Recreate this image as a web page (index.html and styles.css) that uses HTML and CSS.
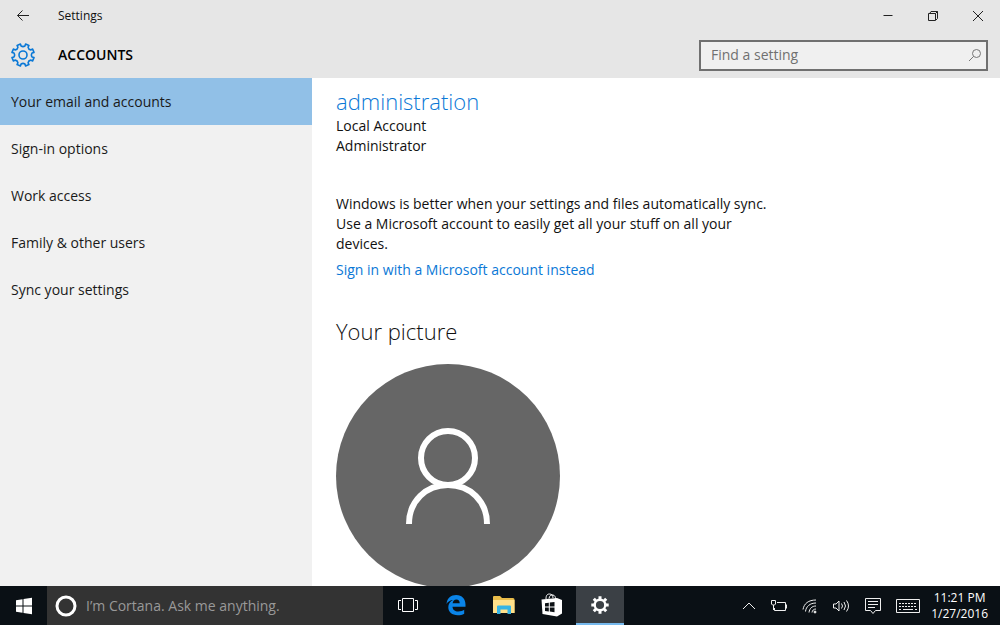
FILE: index.html
```html
<!DOCTYPE html>
<html lang="en">
<head>
    <meta charset="UTF-8">
    <meta name="viewport" content="width=device-width, initial-scale=1.0">
    <title>Settings</title>
    <link rel="stylesheet" href="styles.css">
</head>
<body>

<header>
    <div class="title-bar">
        <button class="back-button" aria-label="Back">
            <svg width="14" height="12" viewBox="0 0 14 12"><path d="M13 5.500H1.500M6.500 .5L1.500 5.500l5 5"/></svg>
        </button>
        <span class="window-title">Settings</span>
        <div class="window-buttons">
            <button aria-label="Minimize">
                <svg width="12" height="12" viewBox="0 0 12 12"><path d="M1.500 5.500h9"/></svg>
            </button>
            <button aria-label="Restore">
                <svg width="12" height="12" viewBox="0 0 12 12"><path d="M1.500 3.500h7v7h-7zM3 3L4 1.500h6.500v7L9 10M8.500 3.500l2-2"/></svg>
            </button>
            <button aria-label="Close">
                <svg width="12" height="12" viewBox="0 0 12 12"><path d="M1 1l10 10M11 1L1 11"/></svg>
            </button>
        </div>
    </div>
    <div class="heading-bar">
        <svg class="gear" width="24" height="24" viewBox="-12 -12 24 24">
            <path d="M-2.600 -11L-1.900 -9Q0 -7.800 1.900 -9L2.600 -11L5.900 -9.600L5.100 -7.700Q5.500 -5.500 7.700 -5.100L9.600 -5.900L11 -2.600L9 -1.900Q7.800 0 9 1.900L11 2.600L9.600 5.900L7.700 5.100Q5.500 5.500 5.100 7.700L5.900 9.600L2.600 11L1.900 9Q0 7.800 -1.900 9L-2.600 11L-5.900 9.600L-5.100 7.700Q-5.500 5.500 -7.700 5.100L-9.600 5.900L-11 2.600L-9 1.900Q-7.800 0 -9 -1.900L-11 -2.600L-9.600 -5.900L-7.700 -5.100Q-5.500 -5.500 -5.100 -7.700L-5.900 -9.600Z"/>
            <circle r="4"/>
        </svg>
        <h1>ACCOUNTS</h1>
        <div class="search-box">
            <input type="text" placeholder="Find a setting" aria-label="Find a setting">
            <svg width="14" height="14" viewBox="0 0 14 14"><circle cx="8.500" cy="5.500" r="4"/><path d="M5.700 8.300L1 13"/></svg>
        </div>
    </div>
</header>

<main>
    <nav>
        <a class="active" href="#">Your email and accounts</a>
        <a href="#">Sign-in options</a>
        <a href="#">Work access</a>
        <a href="#">Family &amp; other users</a>
        <a href="#">Sync your settings</a>
    </nav>

    <section>
        <h2 class="user-name">administration</h2>
        <p>Local Account<br>Administrator</p>
        <p class="sync-text">Windows is better when your settings and files automatically sync. Use a Microsoft account to easily get all your stuff on all your devices.</p>
        <a class="sign-in-link" href="#">Sign in with a Microsoft account instead</a>
        <h2 class="picture-title">Your picture</h2>
        <svg class="picture" width="224" height="224" viewBox="0 0 224 224">
            <circle class="disc" cx="112" cy="112" r="112"/>
            <circle cx="112" cy="94" r="27"/>
            <path d="M73 160C73 137 90 121 112 121s39 16 39 39"/>
        </svg>
    </section>
</main>

<!-- Taskbar -->
<footer>
    <button class="start-button" aria-label="Start">
        <svg width="18" height="18" viewBox="0 0 18 18"><path d="M1 3.200L7.500 2.200V8.500H1zM8.500 2L17 .8V8.500H8.500zM1 9.500H7.500V15.800L1 14.800zM8.500 9.500H17V17.200L8.500 16z"/></svg>
    </button>
    <div class="cortana">
        <svg width="22" height="22" viewBox="0 0 22 22"><circle cx="11" cy="11" r="9"/></svg>
        <input type="text" placeholder="I’m Cortana. Ask me anything." aria-label="Ask Cortana">
    </div>
    <div class="apps">
        <button aria-label="Task view">
            <svg class="line" width="20" height="16" viewBox="0 0 20 16"><path d="M4.500 1.500h11v13h-11zM3 3.500H.5v9H3M17 3.500h2.500v9H17"/></svg>
        </button>
        <button aria-label="Edge">
            <svg width="20" height="22" viewBox="0 0 20 22"><path fill="#0a84e8" d="M.5 10C1 4 5 1 10.200 1C16 1 19.500 5 19.500 10.500V12.800H6.500C6.700 16 9 17.500 12.200 17.500C14.700 17.500 16.700 16.800 18.200 15.800V19.700C16.500 20.700 14.200 21.200 11.700 21.200C6 21.200 2.300 18 2.300 13.300C2.300 10 4 7.500 7 6C4.300 6.200 2 7.500 .5 10ZM6.600 9.200H13.700C13.700 6.800 12.600 5.400 10.400 5.400C8.300 5.400 7 6.800 6.600 9.200Z"/></svg>
        </button>
        <button aria-label="File Explorer">
            <svg width="22" height="20" viewBox="0 0 22 20"><path fill="#e9bd4b" d="M0 2Q0 1 1 1H7L9 3H20Q21.500 3 21.500 4.500V18H0z"/><path fill="#ffe08a" d="M0 5h21.500v13H0z"/><path fill="#36b4e5" d="M4 11.500Q4 10.500 5 10.500H17Q18 10.500 18 11.500V19H14.500V14.500H7.500V19H4z"/></svg>
        </button>
        <button aria-label="Store">
            <svg width="22" height="24" viewBox="0 0 22 24"><path fill="none" stroke="#fff" stroke-width="1" d="M5 6C5 2 6.500 1 8.500 1S12 2.500 12 5M8 5.500C8.500 2.500 10 1.500 12 2s2.500 2 2.500 4"/><path fill="#fff" d="M.5 6.500L16 5L21 7V20.500L16 23.500L1.500 21z"/><path fill="#0b1014" d="M4 10.200L7.800 9.700V13.500H4zM8.800 9.600L13.500 9V13.500H8.800zM4 14.500H7.800V18.400L4 18zM8.800 14.500H13.500V19.200L8.800 18.600z"/></svg>
        </button>
        <button class="open" aria-label="Settings">
            <svg width="18" height="18" viewBox="-9 -9 18 18"><g stroke="#fff" stroke-width="3"><path d="M0 -8.700V-6M0 6V8.700M-8.700 0H-6M6 0H8.700M-6.200 -6.200L-4 -4M4 4L6.200 6.200M6.200 -6.200L4 -4M-4 4L-6.200 6.200"/></g><circle r="5.300" fill="none" stroke="#fff" stroke-width="2.400"/></svg>
        </button>
    </div>
    <div class="tray">
        <div class="tray-icons">
            <svg width="14" height="14" viewBox="0 0 14 14"><path d="M1 10l6-6 6 6"/></svg>
            <svg width="18" height="14" viewBox="0 0 18 14"><path d="M7 3.500h8.500v8h-11V9M16.500 5.500v4M1.500 1.500h4v3.500l-1 1h-2l-1-1zM3.500 6v5"/></svg>
            <svg width="16" height="16" viewBox="0 0 16 16"><path d="M1 11.500C2 5.500 6.500 2 14 2M3.500 13.500C4 8.500 8 5 14 5M7 14.500C7.500 10.500 10 8 14 8M10 14.500C10.300 12.500 11.500 11 14 11"/><circle class="dot" cx="13" cy="14" r="1"/></svg>
            <svg width="18" height="14" viewBox="0 0 18 14"><path d="M1.500 5h2.500l3-3v10l-3-3H1.500zM9.500 4.500q2 2.500 0 5M12 3q3 4 0 8M14.500 1.500q4 5.500 0 11"/></svg>
            <svg width="18" height="18" viewBox="0 0 18 18"><path d="M1.500 1.500h15v12h-5L9 16.500l-2.500-3h-5zM4 4.500h10M4 7.500h10M4 10.500h7"/></svg>
            <svg width="24" height="14" viewBox="0 0 24 14"><path d="M.5 .5h23v13H.5z"/><path stroke-dasharray="2 1" d="M3 4.500h18M3 7.500h18"/><path d="M3 10.500h2M7 10.500h10M19 10.500h2"/></svg>
        </div>
        <div class="clock">11:21 PM<br>1/27/2016</div>
    </div>
</footer>

</body>
</html>
```
FILE: styles.css
```css
* {
    box-sizing: border-box;
}

body {
    display: flex;
    flex-direction: column;
    height: 100vh;
    margin: 0;
    overflow: hidden;
    font-family: "Open Sans", "Noto Sans", sans-serif;
    font-size: 14px;
    line-height: 20px;
    color: #111;
    background-color: white;
}

button {
    display: flex;
    align-items: center;
    justify-content: center;
    padding: 0;
    border: none;
    background: none;
}

h1, h2, p {
    margin: 0;
}

h2 {
    font-size: 22px;
    font-weight: 300;
    line-height: 30px;
}

a {
    text-decoration: none;
}

svg {
    flex: none;
}

header {
    background-color: #e6e6e6;
}

header svg {
    fill: none;
    stroke: #222;
}

/* Window title and its buttons */
.title-bar {
    display: flex;
    align-items: center;
    height: 32px;
}

.back-button {
    width: 46px;
    height: 32px;
}

.window-title {
    padding-left: 12px;
    font-size: 12px;
}

.window-buttons {
    display: flex;
    margin-left: auto;
}

.window-buttons button {
    width: 45px;
    height: 32px;
}

.heading-bar {
    display: flex;
    align-items: center;
    height: 46px;
    padding: 0 12px 0 11px;
}

.heading-bar .gear {
    stroke: #0a78d6;
    stroke-width: 1.6;
    stroke-linejoin: round;
}

h1 {
    padding-left: 23px;
    font-size: 14px;
    font-weight: 600;
    color: #000;
}

.search-box {
    display: flex;
    align-items: center;
    width: 289px;
    height: 31px;
    margin-left: auto;
    padding: 0 4px 0 10px;
    border: 2px solid #707070;
    background-color: #f0f0f0;
}

.search-box svg {
    stroke: #777;
}

input {
    flex: 1;
    min-width: 0;
    padding: 0;
    border: none;
    outline: none;
    background: none;
    font: inherit;
}

input::placeholder {
    color: #707070;
    opacity: 1;
}

main {
    display: flex;
    flex: 1;
    min-height: 0;
}

nav {
    width: 312px;
    background-color: #f1f1f1;
}

nav a {
    display: flex;
    align-items: center;
    height: 47px;
    padding: 0 11px;
    color: #1a1a1a;
}

nav a.active {
    background-color: #91c0e7;
}

section {
    flex: 1;
    padding: 8px 24px 0;
    overflow: hidden;
}

.user-name {
    color: #0a78d6;
}

.sync-text {
    max-width: 440px;
    margin: 38px 0 6px;
}

.sign-in-link {
    color: #0a78d6;
}

.picture-title {
    margin: 36px 0 18px;
}

.picture {
    display: block;
    fill: none;
    stroke: white;
    stroke-width: 6;
}

.picture .disc {
    fill: #666;
    stroke: none;
}

/* Taskbar */
footer {
    display: flex;
    height: 39px;
    background-color: #0a1015;
    color: white;
}

.start-button {
    width: 47px;
    fill: white;
}

.cortana {
    display: flex;
    align-items: center;
    width: 336px;
    padding-left: 8px;
    gap: 9px;
    background-color: #333;
}

.cortana svg {
    fill: none;
    stroke: white;
    stroke-width: 3;
}

.cortana input::placeholder {
    color: #999;
}

.apps {
    display: flex;
    padding-left: 1px;
}

.apps button {
    width: 48px;
    border-bottom: 2px solid transparent;
}

.apps .open {
    background-color: #3b4045;
    border-color: #76b9ed;
}

.apps .line {
    fill: none;
    stroke: white;
}

.tray {
    display: flex;
    align-items: center;
    gap: 11px;
    margin-left: auto;
    padding-right: 12px;
}

.tray-icons {
    display: flex;
    align-items: center;
    gap: 14px;
    fill: none;
    stroke: #eee;
}

.tray-icons .dot {
    fill: #eee;
}

.clock {
    font-size: 12px;
    line-height: 16px;
    text-align: center;
}
```
